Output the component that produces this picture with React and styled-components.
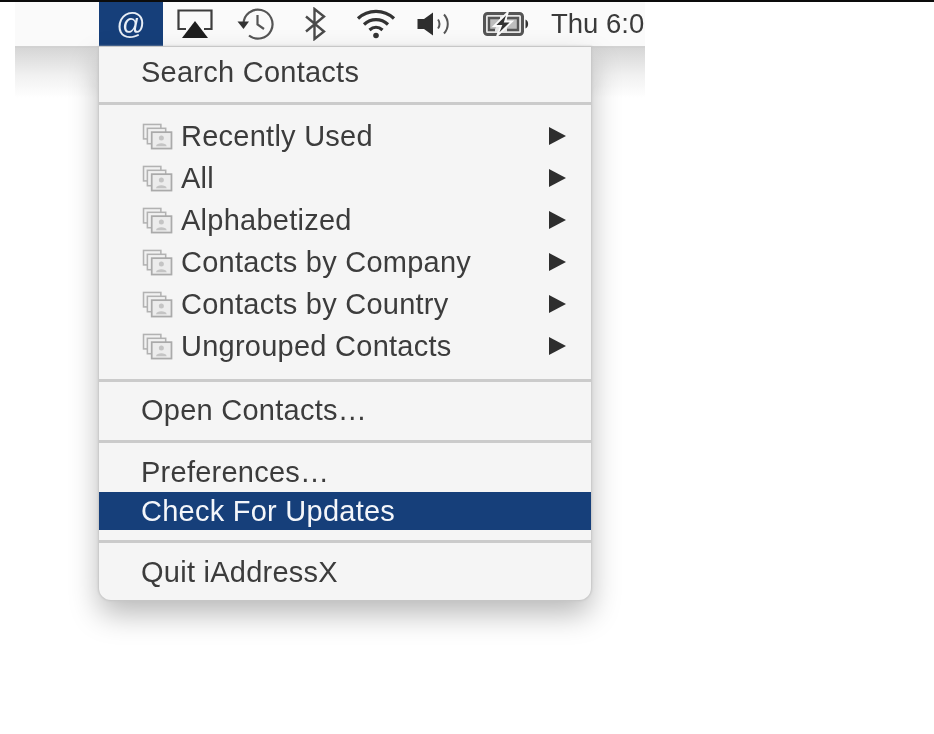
import styled, { createGlobalStyle } from "styled-components";

const Global = createGlobalStyle`
  html, body { margin: 0; padding: 0; background: #fff; }
  body { font-family: "Liberation Sans", Arial, sans-serif; width: 934px; height: 734px; overflow: hidden; }
`;
const TopLine = styled.div`
  height: 2px; background: #0c0c0c;
`;
const Desktop = styled.div`
  position: relative; width: 630px; margin-left: 15px;
`;
const MenuBar = styled.div`
  display: flex; align-items: center; height: 44px; padding-left: 84px;
  background: #fafafa; border-bottom: 2px solid #d2d2d2; overflow: hidden;
`;
const AppIcon = styled.div`
  width: 64px; height: 44px; flex: none; display: flex; align-items: center; justify-content: center;
  background: #163f7a; color: #e8eef6; font-size: 29px; filter: blur(0.5px);
`;
const Status = styled.span`
  display: flex; flex: none; margin-left: ${(props) => props.$gap}px; filter: blur(0.6px);
`;
const Clock = styled.span`
  flex: none; margin-left: 22px; font-size: 27.5px; color: #3a3a3a;
  white-space: nowrap; filter: blur(0.5px);
`;
const BarShadow = styled.div`
  height: 50px; background: linear-gradient(#d6d6d6, #f1f1f1 55%, #fff);
`;
const Menu = styled.div`
  position: absolute; left: 84px; top: 45px; width: 492px; height: 553px;
  background: #f5f5f5; border-radius: 0 0 12px 12px; overflow: hidden;
  box-shadow: 0 0 2px 1px #c6c6c6, 0 14px 30px rgba(0, 0, 0, 0.28);
`;
const Section = styled.div`
  padding: ${(props) => props.$top}px 0 ${(props) => props.$bottom}px;
  border-bottom: ${(props) => (props.$last ? "0" : "3px solid #cbcbcb")};
`;
const Row = styled.div`
  display: flex; align-items: center; box-sizing: border-box;
  height: ${(props) => props.$height || 42}px; padding: 0 25px 0 42px;
  font-size: 29px; letter-spacing: 0.25px; white-space: nowrap;
  color: ${(props) => (props.$active ? "#f4f6fa" : "#3c3c3c")};
  background: ${(props) => (props.$active ? "#163f7a" : "transparent")};
`;
const RowText = styled.span`
  flex: 1; filter: blur(0.45px);
`;
const Arrow = styled.span`
  width: 0; height: 0; border-left: 17px solid #2e2e2e;
  border-top: 9px solid transparent; border-bottom: 9px solid transparent;
`;
const StackIcon = styled.svg`
  flex: none; width: 31px; height: 27px; margin: 0 8px 0 1px; filter: blur(0.5px);
`;

const Airplay = () => (
  <svg width="36" height="30" viewBox="0 0 36 30">
    <path d="M9 20H1.5V1.5h33V20H27" fill="none" stroke="#3e3e3e" strokeWidth="2.2" />
    <path d="M18 12L31 29H5z" fill="#1e1e1e" />
  </svg>
);
const TimeMachine = () => (
  <svg width="38" height="34" viewBox="0 0 38 34">
    <path d="M6.5 17A14.5 14.5 0 1 1 12 28.5" fill="none" stroke="#555" strokeWidth="2.2" />
    <path d="M0.5 14.5H12L6.5 22z" fill="#333" />
    <path d="M20.5 8V17.5L27 22" fill="none" stroke="#555" strokeWidth="2.2" />
  </svg>
);
const Bluetooth = () => (
  <svg width="22" height="34" viewBox="0 0 22 34">
    <path d="M2 9.5L20 24.5L10.5 32V2L20 9.5L2 24.5" fill="none" stroke="#4a4a4a" strokeWidth="2.4" />
  </svg>
);
const Wifi = () => (
  <svg width="40" height="30" viewBox="0 0 40 30">
    <path d="M2 9.5C12 0 28 0 38 9.5" fill="none" stroke="#333" strokeWidth="3.2" />
    <path d="M8 15.5C15 9 25 9 32 15.5" fill="none" stroke="#333" strokeWidth="3.2" />
    <path d="M13.5 21C17.5 17.5 22.5 17.5 26.5 21" fill="none" stroke="#333" strokeWidth="3.2" />
    <circle cx="20" cy="26.5" r="2.8" fill="#333" />
  </svg>
);
const Speaker = () => (
  <svg width="34" height="24" viewBox="0 0 34 24">
    <path d="M0.5 7H7L16 0.5V23.5L7 17H0.5z" fill="#2e2e2e" />
    <path d="M21 7.5C23 10 23 14 21 16.5" fill="none" stroke="#555" strokeWidth="2" />
    <path d="M27 2.5C32 8 32 16 27 21.5" fill="none" stroke="#555" strokeWidth="2" />
  </svg>
);
const Battery = () => (
  <svg width="46" height="24" viewBox="0 0 46 24">
    <rect x="1.5" y="1.5" width="38" height="21" rx="3" fill="#e6e6e6" stroke="#555" strokeWidth="3" />
    <path d="M17 6H6V18H12" fill="#bdbdbd" stroke="#555" strokeWidth="2.4" />
    <path d="M24 6H35V18H24" fill="#bdbdbd" stroke="#555" strokeWidth="2.4" />
    <path d="M25 0L11 14H18L14 24L29 9.5H22z" fill="#333" stroke="#fafafa" strokeWidth="1.8" />
    <path d="M42.5 7.5C46 9 46 15 42.5 16.5z" fill="#333" />
  </svg>
);
const Stack = () => (
  <StackIcon viewBox="0 0 32 28">
    <rect x="1.5" y="1.5" width="18" height="15" fill="#f1f1f1" stroke="#b2b2b2" strokeWidth="1.6" />
    <rect x="5.5" y="5.5" width="19" height="16" fill="#f1f1f1" stroke="#b2b2b2" strokeWidth="1.6" />
    <rect x="10" y="9.5" width="20.5" height="17" fill="#ececec" stroke="#aaa" strokeWidth="1.8" />
    <circle cx="20" cy="15.5" r="2.6" fill="#c4c4c4" />
    <path d="M14.5 24C15 20 25 20 25.5 24z" fill="#c4c4c4" />
  </StackIcon>
);

const groups = ["Recently Used", "All", "Alphabetized", "Contacts by Company", "Contacts by Country", "Ungrouped Contacts"];

export default function App() {
  return (
    <>
      <Global />
      <TopLine />
      <Desktop>
        <MenuBar>
          <AppIcon>@</AppIcon>
          <Status $gap={14}><Airplay /></Status>
          <Status $gap={24}><TimeMachine /></Status>
          <Status $gap={29}><Bluetooth /></Status>
          <Status $gap={30}><Wifi /></Status>
          <Status $gap={21}><Speaker /></Status>
          <Status $gap={32}><Battery /></Status>
          <Clock>Thu 6:0</Clock>
        </MenuBar>
        <BarShadow />
        <Menu>
          <Section $top={4} $bottom={9}>
            <Row><RowText>Search Contacts</RowText></Row>
          </Section>
          <Section $top={10} $bottom={12}>
            {groups.map((g) => (
              <Row key={g}><Stack /><RowText>{g}</RowText><Arrow /></Row>
            ))}
          </Section>
          <Section $top={7} $bottom={9}>
            <Row><RowText>Open Contacts…</RowText></Row>
          </Section>
          <Section $top={9} $bottom={10}>
            <Row $height={40}><RowText>Preferences…</RowText></Row>
            <Row $height={38} $active><RowText>Check For Updates</RowText></Row>
          </Section>
          <Section $top={8} $bottom={0} $last>
            <Row><RowText>Quit iAddressX</RowText></Row>
          </Section>
        </Menu>
      </Desktop>
    </>
  );
}
